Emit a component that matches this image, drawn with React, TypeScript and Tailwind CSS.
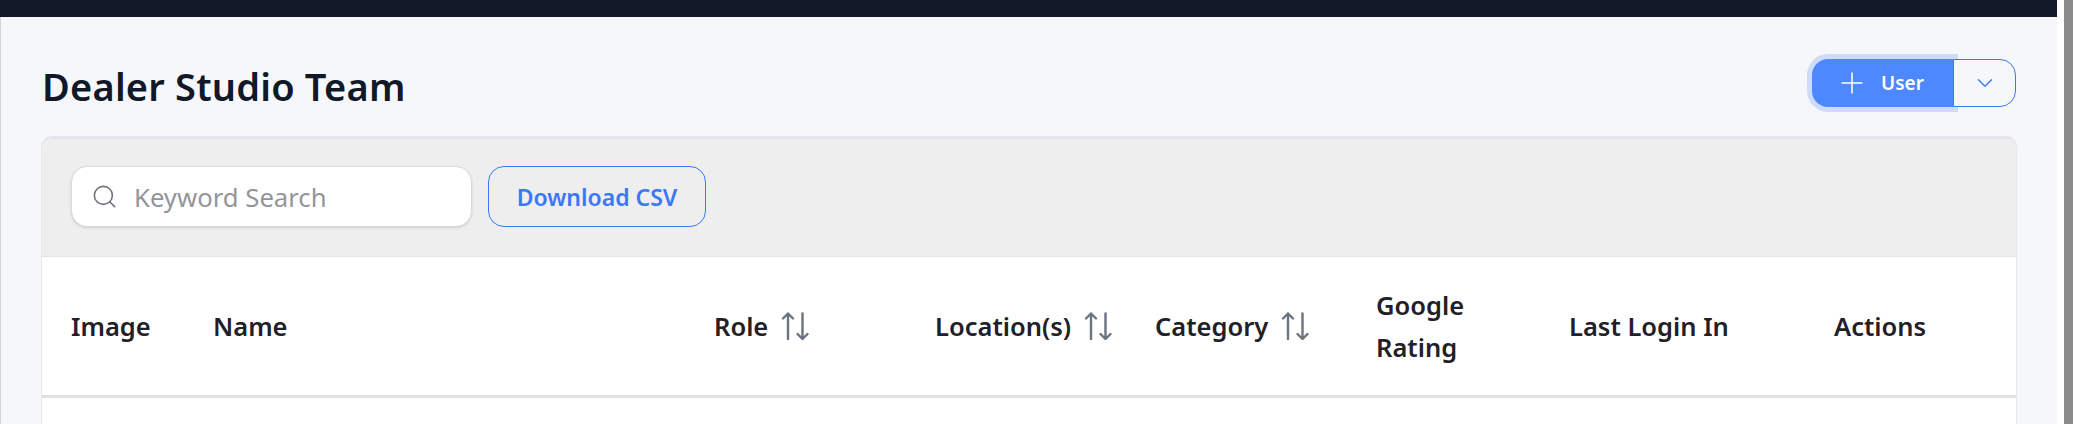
import { ChevronDown, Plus, Search } from "lucide-react";

const columns = [
  { label: "Image", width: "w-[150px]" },
  { label: "Name", width: "w-[501px]" },
  { label: "Role", width: "w-[221px]", sort: true },
  { label: "Location(s)", width: "w-[220px]", sort: true },
  { label: "Category", width: "w-[221px]", sort: true },
  { label: "Google Rating", width: "w-[193px]", narrow: true },
  { label: "Last Login In", width: "w-[265px]" },
  { label: "Actions", width: "w-[203px]" },
];

const SortIcon = () => (
  <svg width="28" height="28" viewBox="0 0 28 28" fill="none" stroke="#6b7280" strokeWidth="2.4" strokeLinecap="round" strokeLinejoin="round" className="ml-[13px] shrink-0">
    <path d="M7 27V1.5M2 6.5l5-5 5 5" />
    <path d="M21.5 1.5V27M16.5 22l5 5 5-5" />
  </svg>
);

export default function App() {
  return (
    <div className="flex h-[424px] w-[2073px] overflow-hidden bg-white font-['Noto_Sans',sans-serif]">
      <div className="flex w-[2057px] flex-col">
        <div className="h-[17px] bg-[#111827]" />
        <div className="flex flex-1 flex-col border-l border-[#d1d5db] bg-[#f6f7fb] pl-[41px] pr-[41px]">
          <div className="flex h-[120px] items-start justify-between pt-[42px]">
            <h1 className="text-[38px] font-semibold leading-[54px] tracking-[0.2px] text-[#111827]">Dealer Studio Team</h1>
            <div className="flex h-[48px]">
              <button className="flex w-[141px] items-center rounded-l-[16px] bg-[#4d88ff] pl-[30px] text-[19px] font-semibold text-white shadow-[0_0_0_5px_#cfdcf8]">
                <Plus size={34} strokeWidth={1.1} className="ml-[-7px] shrink-0" />
                <span className="ml-[12px]">User</span>
              </button>
              <button className="z-10 flex w-[63px] items-center justify-center rounded-r-[16px] border border-[#3b78f6] bg-[#f6f7fb] text-[#3b78f6]">
                <ChevronDown size={26} strokeWidth={1.3} />
              </button>
            </div>
          </div>
          <div className="flex-1 overflow-hidden rounded-t-[10px] border-t-[2px] border-[#e2e4ea] bg-white shadow-[0_0_0_1px_#e5e7eb]">
            <div className="flex h-[118px] items-center gap-[16px] border-b border-[#e2e2e2] bg-[#eeeeee] pb-[2px] pl-[29px]">
              <div className="flex h-[61px] w-[401px] items-center gap-[16px] rounded-[16px] border border-[#d8d8de] bg-white pl-[19px] shadow-sm">
                <Search size={27} strokeWidth={1.4} className="shrink-0 text-[#6b7280]" />
                <span className="pt-[4px] text-[25.7px] text-[#94959a]">Keyword Search</span>
              </div>
              <button className="h-[61px] w-[218px] rounded-[16px] border border-[#3b78f6] pt-[1px] text-[23px] font-semibold text-[#3b78f6]">
                Download CSV
              </button>
            </div>
            <table className="w-full table-fixed border-b-[3px] border-[#dfe1e7]">
              <thead>
                <tr className="h-[139px]">
                  {columns.map((col) => (
                    <th key={col.label} className={`${col.width} pl-[21px] text-left align-middle text-[25.5px] font-semibold leading-[42px] text-[#1f2028] first:pl-[29px]`}>
                      <div className="flex items-center">
                        <span className={col.narrow ? "w-[110px]" : ""}>{col.label}</span>
                        {col.sort && <SortIcon />}
                      </div>
                    </th>
                  ))}
                </tr>
              </thead>
            </table>
          </div>
        </div>
      </div>
      <div className="w-[7px] bg-white" />
      <div className="w-[9px] bg-[#8a8a8a]" />
    </div>
  );
}
